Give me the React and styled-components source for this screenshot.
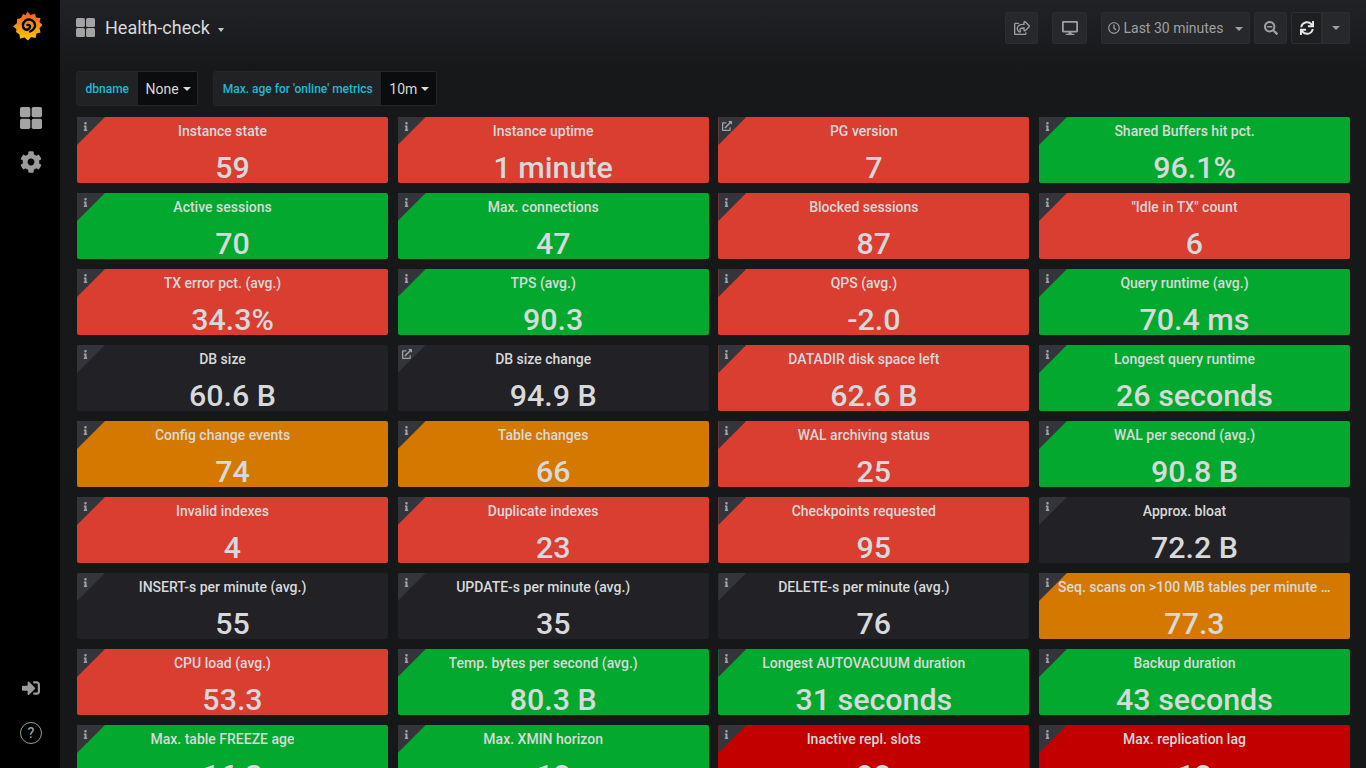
import React from "react";
import styled, { createGlobalStyle } from "styled-components";
import {
  FaCog,
  FaDesktop,
  FaExternalLinkAlt,
  FaInfo,
  FaRegClock,
  FaRegShareSquare,
  FaSearchMinus,
  FaSignInAlt,
  FaSync,
} from "react-icons/fa";

const RED = "#da3e30";
const GREEN = "#03a92e";
const ORANGE = "#d47800";
const DARK = "#212126";
const CRIMSON = "#c30000";

const panels = [
  ["Instance state", "59", RED],
  ["Instance uptime", "1 minute", RED],
  ["PG version", "7", RED, true],
  ["Shared Buffers hit pct.", "96.1%", GREEN],
  ["Active sessions", "70", GREEN],
  ["Max. connections", "47", GREEN],
  ["Blocked sessions", "87", RED],
  ['"Idle in TX" count', "6", RED],
  ["TX error pct. (avg.)", "34.3%", RED],
  ["TPS (avg.)", "90.3", GREEN],
  ["QPS (avg.)", "-2.0", RED],
  ["Query runtime (avg.)", "70.4 ms", GREEN],
  ["DB size", "60.6 B", DARK],
  ["DB size change", "94.9 B", DARK, true],
  ["DATADIR disk space left", "62.6 B", RED],
  ["Longest query runtime", "26 seconds", GREEN],
  ["Config change events", "74", ORANGE],
  ["Table changes", "66", ORANGE],
  ["WAL archiving status", "25", RED],
  ["WAL per second (avg.)", "90.8 B", GREEN],
  ["Invalid indexes", "4", RED],
  ["Duplicate indexes", "23", RED],
  ["Checkpoints requested", "95", RED],
  ["Approx. bloat", "72.2 B", DARK],
  ["INSERT-s per minute (avg.)", "55", DARK],
  ["UPDATE-s per minute (avg.)", "35", DARK],
  ["DELETE-s per minute (avg.)", "76", DARK],
  ["Seq. scans on >100 MB tables per minute (avg.)", "77.3", ORANGE],
  ["CPU load (avg.)", "53.3", RED],
  ["Temp. bytes per second (avg.)", "80.3 B", GREEN],
  ["Longest AUTOVACUUM duration", "31 seconds", GREEN],
  ["Backup duration", "43 seconds", GREEN],
  ["Max. table FREEZE age", "16.3", GREEN],
  ["Max. XMIN horizon", "18", GREEN],
  ["Inactive repl. slots", "98", CRIMSON],
  ["Max. replication lag", "18", CRIMSON],
];

const GlobalStyle = createGlobalStyle`
  html, body {
    margin: 0;
    height: 100%;
    overflow: hidden;
    background: #161719;
  }
  * {
    box-sizing: border-box;
  }
  #root {
    height: 100%;
  }
`;

const Page = styled.div`
  display: flex;
  height: 768px;
  overflow: hidden;
  font-family: Roboto, "Liberation Sans", sans-serif;
  color: #d8d9da;
`;

const Sidebar = styled.nav`
  flex: 0 0 60px;
  display: flex;
  flex-direction: column;
  align-items: center;
  padding-left: 2px;
  background: #000;
`;

const Logo = styled.svg`
  width: 30px;
  height: 30px;
  margin: 11px 0 1px -6px;
`;

const SideButton = styled.div`
  height: 44px;
  width: 58px;
  display: flex;
  align-items: center;
  justify-content: center;
  color: #9b9b9b;
  margin-top: ${(p) => p.$top || 0}px;
`;

const HelpCircle = styled.div`
  width: 22px;
  height: 22px;
  border: 1.5px solid #9b9b9b;
  border-radius: 50%;
  display: flex;
  align-items: center;
  justify-content: center;
  font-size: 14px;
  font-weight: 500;
  color: #9b9b9b;
`;

const Main = styled.main`
  flex: 1;
  min-width: 0;
  padding: 0 16px 0 16px;
  background: linear-gradient(180deg, #212226 0, #17181a 70px, #161719 100%);
`;

const Navbar = styled.header`
  height: 56px;
  display: flex;
  align-items: center;
`;

const DashTitle = styled.div`
  display: flex;
  align-items: center;
  font-size: 18px;
  line-height: 20px;
  margin-top: -1px;
  color: #d8d9da;
  gap: 10px;
`;

const TitleCaret = styled.span`
  width: 0;
  height: 0;
  margin: 5px 0 0 -2px;
  border-left: 3.5px solid transparent;
  border-right: 3.5px solid transparent;
  border-top: 4px solid #c8c9ca;
`;

const NavActions = styled.div`
  margin-left: auto;
  display: flex;
  align-items: center;
`;

const NavButton = styled.div`
  height: 32px;
  width: ${(p) => p.$w}px;
  margin-left: ${(p) => p.$ml || 0}px;
  display: flex;
  align-items: center;
  justify-content: center;
  gap: 3px;
  font-size: 14px;
  color: ${(p) => (p.$bright ? "#e8e8e8" : "#9fa0a2")};
  background: ${(p) => (p.$flat ? "#1e1f21" : "#27282b")};
  border: 1px solid #2c2d30;
  border-radius: ${(p) => p.$radius || "2px"};
`;

const Caret = styled.span`
  width: 0;
  height: 0;
  margin: ${(p) => p.$margin || 0};
  border-left: 4px solid transparent;
  border-right: 4px solid transparent;
  border-top: 4px solid ${(p) => p.$color || "#9fa0a2"};
`;

const Variables = styled.div`
  display: flex;
  height: 35px;
  margin-top: 15px;
  gap: 15px;
`;

const Variable = styled.div`
  display: flex;
  border: 1px solid #25262a;
  border-radius: 3px;
  overflow: hidden;
`;

const VarLabel = styled.div`
  display: flex;
  align-items: center;
  padding: 0 8.5px;
  background: #212226;
  color: #23b7d5;
  font-size: 12px;
  font-weight: 500;
`;

const VarValue = styled.div`
  display: flex;
  align-items: center;
  gap: 4px;
  padding: 0 6.5px 0 8px;
  background: #0b0c0e;
  color: #d8d9da;
  font-size: 14px;
`;

const Grid = styled.section`
  display: grid;
  grid-template-columns: repeat(4, 1fr);
  grid-auto-rows: 66px;
  gap: 10px 9.667px;
  margin: 11px 0 0 1px;
`;

const Panel = styled.article`
  position: relative;
  display: flex;
  flex-direction: column;
  align-items: center;
  background: ${(p) => p.$bg};
  border-radius: 2px;
`;

const Corner = styled.div`
  position: absolute;
  top: 0;
  left: 0;
  width: 28px;
  height: 28px;
  background: #34353b;
  border-top-left-radius: 2px;
  clip-path: polygon(0 0, 100% 0, 0 100%);
  color: #a2a2a2;
`;

const CornerIcon = styled.span`
  position: absolute;
  top: ${(p) => (p.$link ? 4 : 5)}px;
  left: 4px;
  display: flex;
`;

const TitleRow = styled.div`
  display: flex;
  justify-content: center;
  width: 273px;
  height: 16px;
  margin-top: 6px;
`;

const PanelTitle = styled.span`
  flex: 0 1 auto;
  min-width: 0;
  overflow: hidden;
  white-space: nowrap;
  text-overflow: ellipsis;
  font-size: 14px;
  line-height: 16px;
  font-weight: 500;
  color: #d8d9da;
`;

const TitleSpacer = styled.span`
  flex: 0 1000 20px;
`;

const Value = styled.div`
  flex: none;
  margin-top: 11px;
  font-size: 30.4px;
  line-height: 36px;
  font-weight: 500;
  color: #d8d9da;
  white-space: nowrap;
`;

function DashIcon({ size }) {
  return (
    <svg width={size} height={size} viewBox="0 0 20 20" fill="#a3a3a3">
      <rect x="0" y="0" width="9.4" height="9.4" rx="1.6" />
      <rect x="10.6" y="0" width="9.4" height="9.4" rx="1.6" />
      <rect x="0" y="10.6" width="9.4" height="9.4" rx="1.6" />
      <rect x="10.6" y="10.6" width="9.4" height="9.4" rx="1.6" />
    </svg>
  );
}

function GrafanaLogo() {
  return (
    <Logo viewBox="0 0 30 30">
      <defs>
        <linearGradient id="logoFill" x1="0" y1="0" x2="0" y2="1">
          <stop offset="0" stopColor="#f05a28" />
          <stop offset="1" stopColor="#fbca0a" />
        </linearGradient>
      </defs>
      <path
        fill="url(#logoFill)"
        d="M14.5 0.5 L17.5 4 L22 2.5 L23 6.5 L27.5 7 L26.5 11 L29.5 14 L26.5 17 L27.5 21.5 L23.5 22.5 L22.5 27 L18 26 L15 29.5 L11.5 26.5 L7 27.5 L6.5 23.5 L3 21 L3.5 18 L0 15.5 L4 12 L4 8 L8 7 L10 3 L12.5 4 Z"
      />
      <path
        fill="none"
        stroke="#000"
        strokeWidth="2.4"
        strokeLinecap="round"
        d="M17 20.5 C21 19 23 15.5 21.5 12 C20 8.5 15.5 7.5 12.5 9.5 C9.5 11.5 9 16 11.5 18 C13.5 19.5 16.5 18.5 17 16 C17.3 14.5 16 13.5 14.5 14"
      />
    </Logo>
  );
}

export default function App() {
  return (
    <>
      <GlobalStyle />
      <Page>
        <Sidebar>
          <GrafanaLogo />
          <SideButton $top={54}>
            <DashIcon size={22} />
          </SideButton>
          <SideButton>
            <FaCog size={22} />
          </SideButton>
          <SideButton $top={482}>
            <FaSignInAlt size={18} />
          </SideButton>
          <SideButton $top={1}>
            <HelpCircle>?</HelpCircle>
          </SideButton>
        </Sidebar>
        <Main>
          <Navbar>
            <DashTitle>
              <DashIcon size={19} />
              Health-check
              <TitleCaret />
            </DashTitle>
            <NavActions>
              <NavButton $w={33}>
                <FaRegShareSquare size={16} />
              </NavButton>
              <NavButton $w={35} $ml={14}>
                <FaDesktop size={16} />
              </NavButton>
              <NavButton $w={149} $ml={14}>
                <FaRegClock size={12} />
                Last 30 minutes
                <Caret $margin="2px 0 0 8px" />
              </NavButton>
              <NavButton $w={33} $ml={4}>
                <FaSearchMinus size={14} />
              </NavButton>
              <NavButton $w={31} $ml={4} $flat $bright $radius="2px 0 0 2px">
                <FaSync size={14} />
              </NavButton>
              <NavButton $w={28} $radius="0 2px 2px 0">
                <Caret />
              </NavButton>
            </NavActions>
          </Navbar>
          <Variables>
            <Variable>
              <VarLabel>dbname</VarLabel>
              <VarValue>
                None
                <Caret $color="#d8d9da" />
              </VarValue>
            </Variable>
            <Variable>
              <VarLabel>Max. age for 'online' metrics</VarLabel>
              <VarValue>
                10m
                <Caret $color="#d8d9da" />
              </VarValue>
            </Variable>
          </Variables>
          <Grid>
            {panels.map(([title, value, bg, link]) => (
              <Panel key={title} $bg={bg}>
                <Corner>
                  <CornerIcon $link={link}>
                    {link ? <FaExternalLinkAlt size={10} /> : <FaInfo size={9} />}
                  </CornerIcon>
                </Corner>
                <TitleRow>
                  <PanelTitle>{title}</PanelTitle>
                  <TitleSpacer />
                </TitleRow>
                <Value>{value}</Value>
              </Panel>
            ))}
          </Grid>
        </Main>
      </Page>
    </>
  );
}
